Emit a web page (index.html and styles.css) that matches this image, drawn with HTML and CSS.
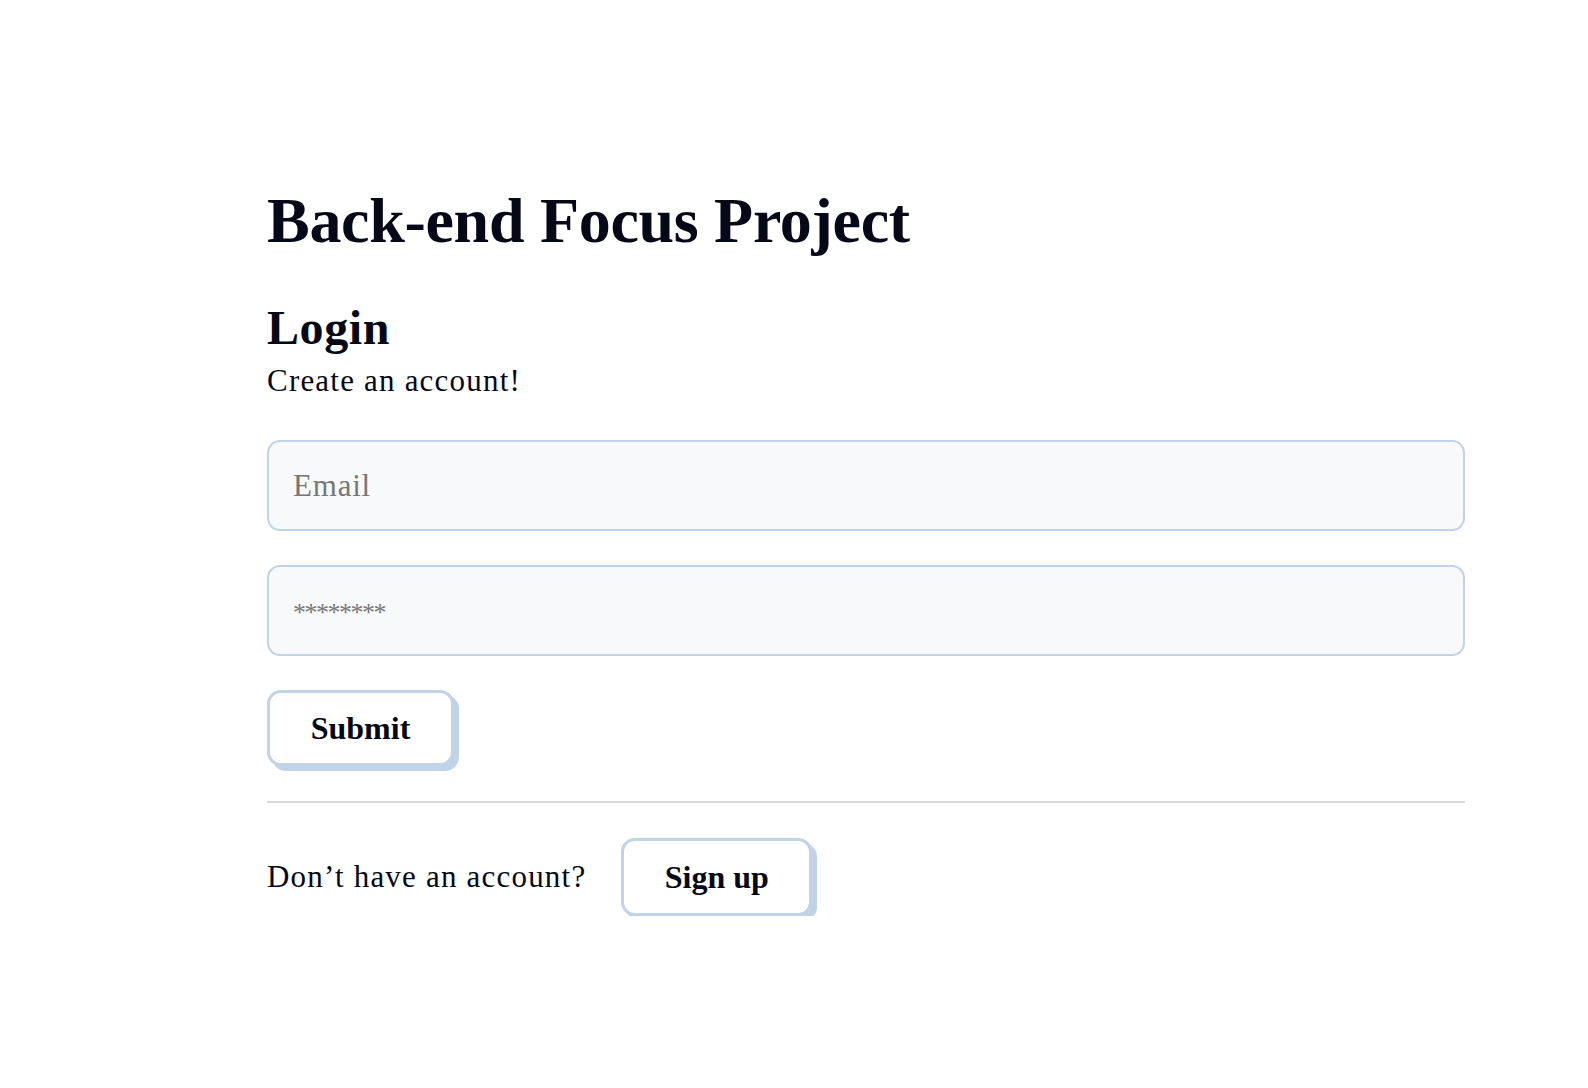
FILE: index.html
```html
<!DOCTYPE html>
<html lang="en">
<head>
<meta charset="utf-8">
<title>Back-end Focus Project</title>
<link rel="stylesheet" href="styles.css">
</head>
<body>
<main class="page">
  <h1 class="title">Back-end Focus Project</h1>
  <h2 class="subtitle">Login</h2>
  <p class="lead">Create an account!</p>
  <form class="form">
    <input class="field" type="email" placeholder="Email">
    <input class="field field-pass" type="password" placeholder="********">
    <div class="actions"><button class="btn" type="button">Submit</button></div>
  </form>
  <hr class="divider">
  <div class="signup">
    <span class="signup-text">Don’t have an account?</span>
    <button class="btn btn-signup" type="button">Sign up</button>
  </div>
</main>
</body>
</html>
```
FILE: styles.css
```css
* { box-sizing: border-box; }
html, body { margin: 0; padding: 0; background: #ffffff; }
body {
  font-family: "Liberation Serif", "DejaVu Serif", serif;
  color: #050816;
}
.page {
  padding: 189px 123px 0 267px;
}
.title {
  margin: 0;
  font-size: 64px;
  line-height: 64px;
  font-weight: 700;
  letter-spacing: -0.3px;
}
.subtitle {
  margin: 51px 0 0;
  font-size: 48px;
  line-height: 48px;
  font-weight: 700;
  letter-spacing: 0.6px;
}
.lead {
  margin: 14px 0 0;
  font-size: 31px;
  line-height: 30px;
  letter-spacing: 1.2px;
}
.form {
  margin-top: 44px;
  display: flex;
  flex-direction: column;
  gap: 34px;
}
.field {
  display: block;
  width: 100%;
  height: 91px;
  border: 2px solid #c1d3e8;
  border-radius: 13px;
  background: #f7f9fb;
  padding: 0 24px;
  font-family: inherit;
  font-size: 31px;
  color: #050816;
  outline: none;
  letter-spacing: 0.8px;
}
.field::placeholder { color: #777777; }
.field-pass::placeholder { font-size: 26px; letter-spacing: -1.5px; }
.actions { display: flex; }
.btn {
  height: 76px;
  width: 187px;
  background: #ffffff;
  border: 3px solid #c1d3e8;
  border-radius: 14px;
  box-shadow: 5px 5px 0 #c1d3e8;
  font-family: inherit;
  font-size: 32px;
  font-weight: 700;
  color: #050816;
  cursor: pointer;
  padding: 0;
}
.divider {
  margin: 35px 0 0;
  border: 0;
  height: 2px;
  background: #d9d9d9;
}
.signup {
  margin-top: 35px;
  display: flex;
  align-items: center;
  gap: 35px;
}
.signup-text { font-size: 31px; letter-spacing: 1.2px; }
.btn-signup { width: 191px; height: 78px; }
```
